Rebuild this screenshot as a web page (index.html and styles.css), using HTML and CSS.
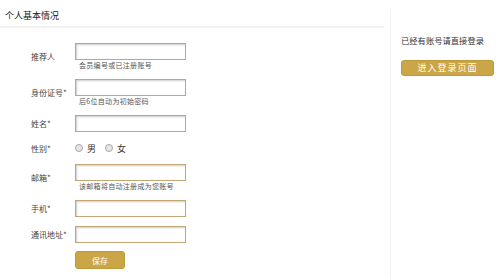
FILE: index.html
```html
<!DOCTYPE html>
<html lang="zh-CN">
<head>
    <meta charset="UTF-8">
    <meta name="viewport" content="width=device-width, initial-scale=1.0">
    <title>个人基本情况</title>
    <link rel="stylesheet" href="styles.css">
</head>
<body>
    <div class="page">
        <div class="main">
            <h2 class="title">个人基本情况</h2>
            <form class="form">
                <div class="row">
                    <label class="label">推荐人</label>
                    <div class="field">
                        <input type="text" class="text">
                        <div class="hint">会员编号或已注册账号</div>
                    </div>
                </div>
                <div class="row">
                    <label class="label">身份证号*</label>
                    <div class="field">
                        <input type="text" class="text">
                        <div class="hint">后6位自动为初始密码</div>
                    </div>
                </div>
                <div class="row">
                    <label class="label">姓名*</label>
                    <div class="field">
                        <input type="text" class="text">
                    </div>
                </div>
                <div class="row row-radio">
                    <label class="label">性别*</label>
                    <div class="field radios">
                        <input type="radio" name="sex" class="radio"><span class="opt">男</span>
                        <input type="radio" name="sex" class="radio"><span class="opt">女</span>
                    </div>
                </div>
                <div class="row">
                    <label class="label">邮箱*</label>
                    <div class="field">
                        <input type="text" class="text">
                        <div class="hint">该邮箱将自动注册成为您账号</div>
                    </div>
                </div>
                <div class="row">
                    <label class="label">手机*</label>
                    <div class="field">
                        <input type="text" class="text">
                    </div>
                </div>
                <div class="row">
                    <label class="label">通讯地址*</label>
                    <div class="field">
                        <input type="text" class="text">
                    </div>
                </div>
                <div class="row row-btn">
                    <span class="label"></span>
                    <button type="button" class="btn save">保存</button>
                </div>
            </form>
        </div>
        <div class="side">
            <p class="side-text">已经有账号请直接登录</p>
            <button type="button" class="btn login">进入登录页面</button>
        </div>
    </div>
</body>
</html>
```

FILE: styles.css
```css
body {
    margin: 0;
    padding: 0;
    background: #fff;
    font-family: "Noto Sans CJK SC", "Liberation Sans", sans-serif;
    color: #333;
}
.page {
    display: flex;
    min-height: 279px;
}
.main {
    width: 384px;
    padding: 8px 0 0 0;
    margin-right: 6px;
}
.title {
    margin: 0;
    padding: 0 0 2px 5px;
    font-size: 9px;
    line-height: 16px;
    font-weight: normal;
    color: #222;
    border-bottom: 2px solid #f2f2f2;
}
.form {
    padding: 15px 0 0 31px;
}
.row {
    display: flex;
    align-items: center;
    margin-bottom: 9px;
}
.row-radio {
    height: 14px;
}
.row-btn {
    margin-top: -1px;
}
.label {
    width: 44px;
    font-size: 8px;
    color: #444;
}
.text {
    display: block;
    box-sizing: border-box;
    width: 111px;
    height: 17px;
    margin: 0;
    border: 1px solid #c2a676;
    box-shadow: inset 1px 1px 2px rgba(0, 0, 0, 0.2);
    background: #fff;
}
.hint {
    padding-left: 4px;
    font-size: 7px;
    letter-spacing: 0.3px;
    line-height: 10px;
    color: #555;
}
.radios {
    display: flex;
    align-items: center;
}
.radio {
    appearance: none;
    -webkit-appearance: none;
    box-sizing: border-box;
    width: 8px;
    height: 8px;
    margin: 0 4px 0 0;
    border: 1px solid #a8a8a8;
    border-radius: 50%;
    background: #e6e6e6;
}
.opt {
    font-size: 9px;
    color: #333;
    margin-right: 9px;
}
.btn {
    box-sizing: border-box;
    margin: 0;
    padding: 0;
    border: 1px solid #bf9a3c;
    border-radius: 3px;
    background: #cba646;
    color: #fff;
    font-family: "Noto Sans CJK SC", "Liberation Sans", sans-serif;
}
.save {
    width: 50px;
    height: 18px;
    font-size: 8px;
}
.side {
    flex: 1;
    margin-top: 10px;
    padding: 24px 0 0 10px;
    border-left: 1px solid #f0f0f0;
}
.side-text {
    margin: 0 0 6px 0;
    font-size: 8.3px;
    line-height: 12px;
    color: #333;
}
.login {
    width: 93px;
    height: 16px;
    font-size: 9px;
    letter-spacing: 1px;
}
```
